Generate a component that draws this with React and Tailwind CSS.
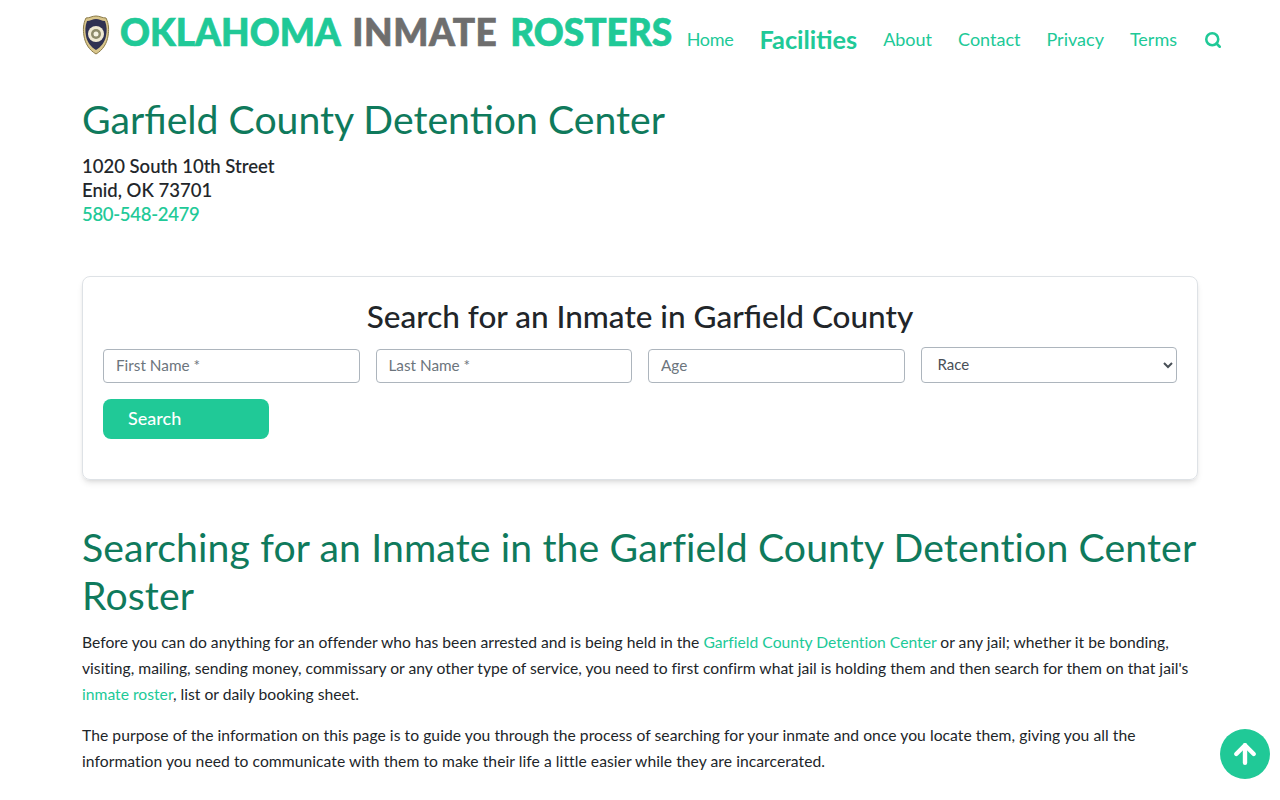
import { Search, ArrowUp } from "lucide-react";

function Badge() {
  return (
    <svg width="28" height="40" viewBox="0 0 28 40" className="shrink-0 mt-[3px]">
      <path d="M14 1 C18 1 20 3 24 3 C27 9 27 15 26 21 C25 28 21 35 14 39 C7 35 3 28 2 21 C1 15 1 9 4 3 C8 3 10 1 14 1 Z" fill="#d9c68c" stroke="#8a7a48" strokeWidth="1" />
      <path d="M14 4 C17 4 20 6 23 6 C25 11 25 16 24 21 C23 27 19 32 14 35 C9 32 5 27 4 21 C3 16 3 11 5 6 C8 6 11 4 14 4 Z" fill="#2f3152" />
      <circle cx="14" cy="19" r="8" fill="#efe9d2" />
      <circle cx="14" cy="19" r="5" fill="#8d8a6a" />
      <circle cx="14" cy="19" r="2.5" fill="#f5f2e2" />
    </svg>
  );
}

export default function App() {
  return (
    <div className="font-['Lato',sans-serif] bg-white text-[#212529] min-h-screen overflow-hidden">
      <header className="flex items-start h-[70px] pl-[82px] pr-[58px]">
        <a className="flex items-start gap-[10px] pt-[12px]">
          <Badge />
          <span className="font-black text-[37px] leading-[40px] text-[#20c997] whitespace-nowrap [word-spacing:4px] [-webkit-text-stroke:0.7px_currentColor]">
            OKLAHOMA <span className="text-[#6e6e6e] tracking-[0.5px]">INMATE</span> ROSTERS
          </span>
        </a>
        <nav className="flex items-center ml-auto gap-[26px] pt-[24px] text-[#20c997] text-[18px] leading-[30px]">
          <a className="tracking-[-0.3px]">Home</a>
          <a className="font-bold text-[25.3px]">Facilities</a>
          <a>About</a>
          <a>Contact</a>
          <a>Privacy</a>
          <a>Terms</a>
          <Search size={18} strokeWidth={3.4} className="mt-[1px] ml-[1px]" />
        </nav>
      </header>

      <main className="px-[82px]">
        <h1 className="text-[39.2px] leading-[48px] text-[#0f7a5c] mt-[25px]">Garfield County Detention Center</h1>
        <div className="mt-[11px] text-[18.5px] leading-[24px] font-medium [-webkit-text-stroke:0.1px_currentColor]">
          <div>1020 South 10th Street</div>
          <div>Enid, OK 73701</div>
          <div className="text-[#20c997] tracking-[-0.3px]">580-548-2479</div>
        </div>

        <section className="mt-[50px] h-[204px] border border-[#dee2e6] rounded-lg shadow-md px-[20px] pt-[19px]">
          <h2 className="text-center text-[31.5px] leading-[40px] font-medium">Search for an Inmate in Garfield County</h2>
          <div className="grid grid-cols-4 gap-4 mt-[11px] items-start">
            {["First Name *", "Last Name *", "Age"].map((p) => (
              <input key={p} placeholder={p} className="mt-[2px] h-[34px] pb-[2px] border border-[#adb5bd] rounded px-3 text-[15.3px] placeholder:text-[#6c757d]" />
            ))}
            <select className="h-[36px] pb-[2px] border border-[#adb5bd] rounded px-3 text-[15px] text-[#495057] bg-white">
              <option>Race</option>
            </select>
          </div>
          <button className="mt-[16px] w-[166px] h-[40px] pb-[2px] bg-[#20c997] rounded-lg text-white text-left pl-[25px] text-[18px] font-medium">Search</button>
        </section>

        <h2 className="mt-[43px] text-[39.2px] leading-[48px] text-[#0f7a5c] tracking-[0.12px]">Searching for an Inmate in the Garfield County Detention Center Roster</h2>
        <p className="mt-[10px] text-[15.67px] leading-[26px] tracking-[0.01px]">
          Before you can do anything for an offender who has been arrested and is being held in the <a className="text-[#20c997]">Garfield County Detention Center</a> or any jail; whether it be bonding, visiting, mailing, sending money, commissary or any other type of service, you need to first confirm what jail is holding them and then search for them on that jail's <a className="text-[#20c997]">inmate roster</a>, list or daily booking sheet.
        </p>
        <p className="mt-[15px] text-[15.67px] leading-[26px] tracking-[0.05px]">
          The purpose of the information on this page is to guide you through the process of searching for your inmate and once you locate them, giving you all the information you need to communicate with them to make their life a little easier while they are incarcerated.
        </p>
      </main>

      <button className="fixed right-[10px] bottom-[21px] w-[50px] h-[50px] rounded-full bg-[#20c997] flex items-center justify-center text-white">
        <ArrowUp size={30} strokeWidth={3.5} />
      </button>
    </div>
  );
}
